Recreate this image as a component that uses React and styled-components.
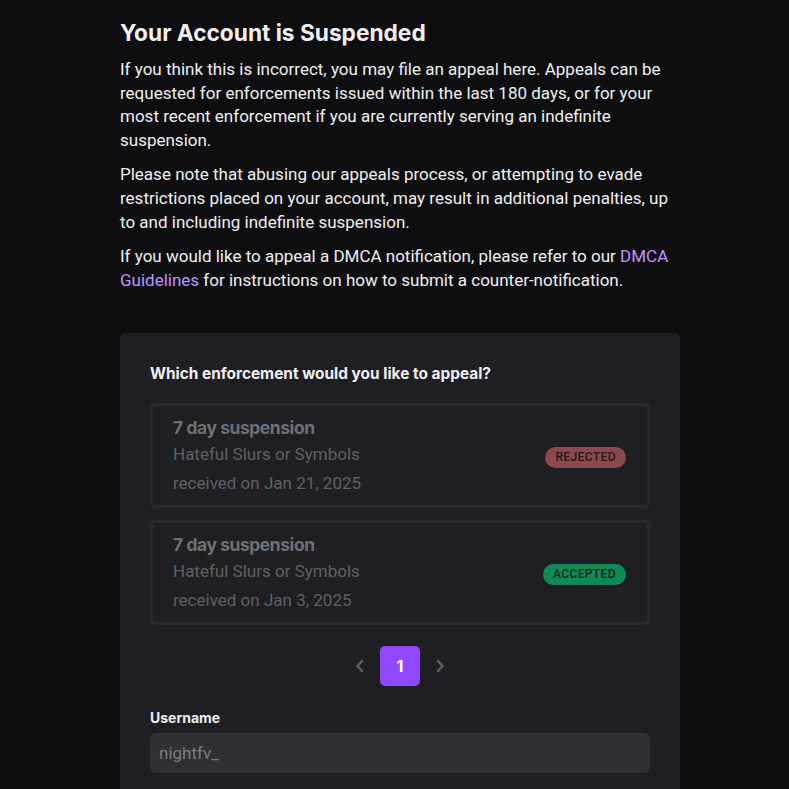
import React from "react";
import styled, { createGlobalStyle } from "styled-components";

const Global = createGlobalStyle`
  html, body { margin: 0; padding: 0; background: #0e0e10; }
  body { font-family: Roboto, "Liberation Sans", sans-serif; color: #efeff1; }
  * { box-sizing: border-box; }
`;

const Page = styled.div`
  padding: 19px 109px 40px 120px;
`;

const Title = styled.h1`
  font-family: Inter, sans-serif;
  font-weight: 700;
  font-size: 22.7px;
  line-height: 28px;
  margin: 0 0 11px;
  color: #efeff1;
`;

const Para = styled.p`
  font-size: 17px;
  line-height: 23.6px;
  margin: 0 0 11px;
  color: #efeff1;
`;

const Link = styled.a`
  color: #bf94ff;
  text-decoration: none;
`;

const Card = styled.section`
  margin-top: 41px;
  background: #1f1f23;
  border-radius: 6px;
  padding: 31px 30px 30px;
`;

const Heading = styled.h2`
  font-family: Inter, sans-serif;
  font-weight: 700;
  font-size: 15.4px;
  line-height: 20px;
  margin: 0 0 19px;
  color: #efeff1;
`;

const List = styled.div`
  display: flex;
  flex-direction: column;
  gap: 12px;
`;

const Item = styled.div`
  display: flex;
  align-items: center;
  justify-content: space-between;
  border: 3px solid #2a2a2e;
  border-radius: 5px;
  padding: 10px 21px 7px 20px;
`;

const ItemText = styled.div`
  display: flex;
  flex-direction: column;
`;

const ItemTitle = styled.div`
  font-family: Inter, sans-serif;
  font-weight: 700;
  font-size: 17.4px;
  line-height: 24px;
  letter-spacing: -0.4px;
  color: #6f6f75;
`;

const ItemLine = styled.div`
  font-size: 17px;
  line-height: 29px;
  color: #5f5f65;
`;

const Badge = styled.span`
  display: inline-flex;
  align-items: center;
  height: 21px;
  padding: 0 10px;
  border-radius: 11px;
  font-size: 12px;
  font-weight: 500;
  letter-spacing: 0.4px;
  background: ${(p) => (p.$kind === "rejected" ? "#8a4a4d" : "#0e8a57")};
  color: ${(p) => (p.$kind === "rejected" ? "#2a1618" : "#07241a")};
`;

const Pager = styled.div`
  display: flex;
  justify-content: center;
  align-items: center;
  gap: 10px;
  margin-top: 21px;
`;

const Chevron = styled.button`
  width: 20px;
  height: 20px;
  background: none;
  border: none;
  padding: 0;
  display: flex;
  align-items: center;
  justify-content: center;
  color: #5f5f65;
`;

const PageBtn = styled.button`
  width: 40px;
  height: 40px;
  border: none;
  border-radius: 5px;
  background: #9147ff;
  color: #ffffff;
  font-family: Inter, sans-serif;
  font-weight: 700;
  font-size: 16px;
`;

const Label = styled.label`
  display: block;
  margin-top: 23px;
  font-family: Inter, sans-serif;
  font-weight: 700;
  font-size: 14px;
  line-height: 18px;
  color: #efeff1;
  margin-bottom: 6px;
`;

const Input = styled.div`
  height: 40px;
  border-radius: 6px;
  background: #2f2f35;
  display: flex;
  align-items: center;
  padding: 0 9px;
  font-size: 17px;
  color: #7c7c82;
`;

const Chev = ({ dir }) => (
  <svg width="16" height="16" viewBox="0 0 16 16" fill="none">
    <path
      d={dir === "left" ? "M10 3 L5.5 8 L10 13" : "M6 3 L10.5 8 L6 13"}
      stroke="currentColor"
      strokeWidth="2.4"
      strokeLinecap="round"
      strokeLinejoin="round"
    />
  </svg>
);

const items = [
  { date: "Jan 21, 2025", status: "rejected", label: "REJECTED" },
  { date: "Jan 3, 2025", status: "accepted", label: "ACCEPTED" },
];

export default function App() {
  return (
    <>
      <Global />
      <Page>
        <Title>Your Account is Suspended</Title>
        <Para>
          If you think this is incorrect, you may file an appeal here. Appeals can be
          requested for enforcements issued within the last 180 days, or for your most
          recent enforcement if you are currently serving an indefinite suspension.
        </Para>
        <Para>
          Please note that abusing our appeals process, or attempting to evade
          restrictions placed on your account, may result in additional penalties, up to
          and including indefinite suspension.
        </Para>
        <Para>
          If you would like to appeal a DMCA notification, please refer to our{" "}
          <Link href="#">DMCA Guidelines</Link> for instructions on how to submit a
          counter-notification.
        </Para>
        <Card>
          <Heading>Which enforcement would you like to appeal?</Heading>
          <List>
            {items.map((it) => (
              <Item key={it.date}>
                <ItemText>
                  <ItemTitle>7 day suspension</ItemTitle>
                  <ItemLine>Hateful Slurs or Symbols</ItemLine>
                  <ItemLine>received on {it.date}</ItemLine>
                </ItemText>
                <Badge $kind={it.status}>{it.label}</Badge>
              </Item>
            ))}
          </List>
          <Pager>
            <Chevron aria-label="previous">
              <Chev dir="left" />
            </Chevron>
            <PageBtn>1</PageBtn>
            <Chevron aria-label="next">
              <Chev dir="right" />
            </Chevron>
          </Pager>
          <Label>Username</Label>
          <Input>nightfv_</Input>
        </Card>
      </Page>
    </>
  );
}
